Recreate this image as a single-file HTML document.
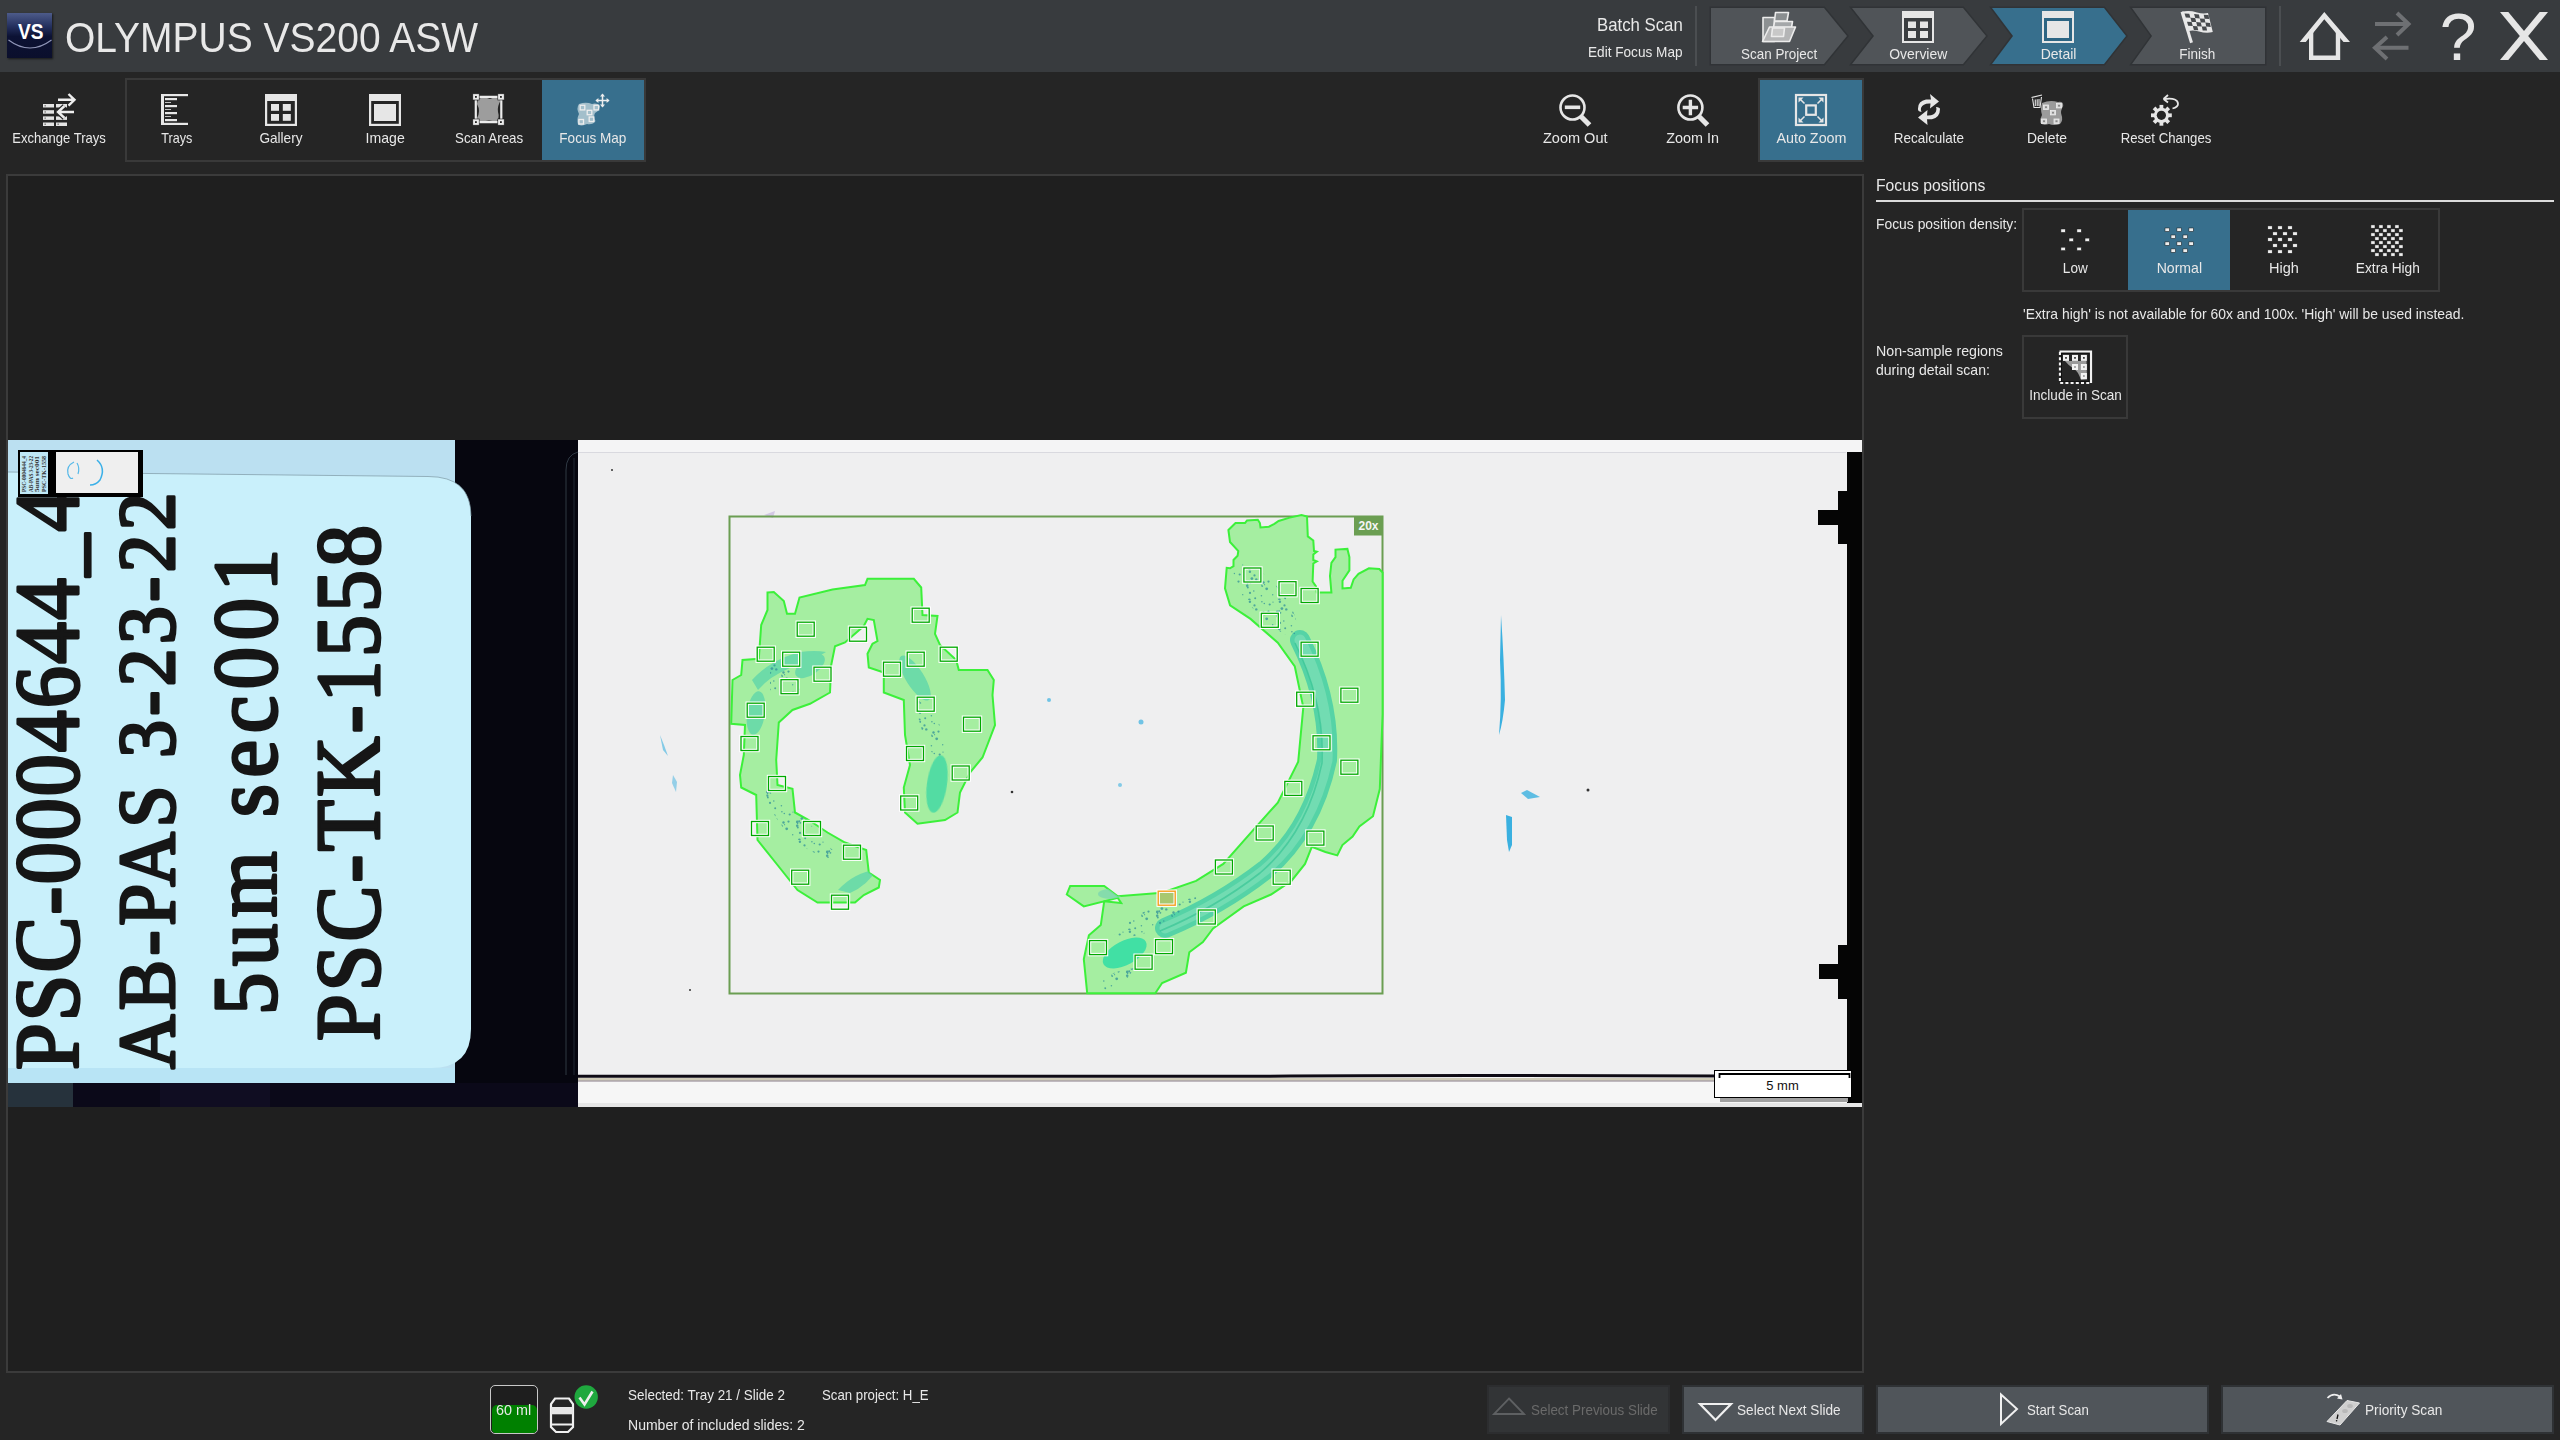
<!DOCTYPE html>
<html><head><meta charset="utf-8">
<style>
*{margin:0;padding:0;box-sizing:border-box}
html,body{width:2560px;height:1440px;overflow:hidden;background:#252525;font-family:"Liberation Sans",sans-serif;color:#e6e6e6}
.a{position:absolute}
.t{position:absolute;white-space:pre;line-height:1;color:#e8e8e8;transform-origin:0 0}
.c{transform-origin:50% 0}
svg{position:absolute;overflow:visible}
</style></head><body>
<!-- HEADER -->
<div class="a" style="left:0;top:0;width:2560px;height:72px;background:#383b3e"></div>
<!-- VS logo -->
<div class="a" style="left:7px;top:13px;width:45px;height:45px;background:linear-gradient(#4d5b8a 0%,#24305e 30%,#0c1234 52%,#0b0f2c 100%);box-shadow:1px 1px 2px rgba(0,0,0,.6)"></div>
<svg style="left:0;top:0" width="60" height="70">
 <path d="M8.5,40 Q30,56 51.5,40" stroke="#a8aed0" stroke-width="1.1" fill="none" opacity=".85"/>
 <text x="18" y="39" font-family="Liberation Sans" font-weight="bold" font-size="22" fill="#fff" textLength="25.5" lengthAdjust="spacingAndGlyphs">VS</text>
</svg>
<div class="a" style="left:1695px;top:6px;width:2px;height:60px;background:#4b4e51"></div>
<div class="a" style="left:2279px;top:6px;width:2px;height:60px;background:#4b4e51"></div>

<!-- chevrons -->
<svg style="left:0;top:0" width="2560" height="72">
 <g stroke="#303336" stroke-width="3" stroke-linejoin="miter" paint-order="stroke">
  <path d="M1711,8 H1824 L1847,36 L1824,64 H1711 Z" fill="#505458"/>
  <path d="M1852,8 H1963 L1986,36 L1963,64 H1852 L1874,36 Z" fill="#505458"/>
  <path d="M1992,8 H2104 L2126,36 L2104,64 H1992 L2013,36 Z" fill="#376f8d"/>
  <path d="M2132,8 H2265 V64 H2132 L2152,36 Z" fill="#505458"/>
 </g>
 <!-- scan project icon -->
 <g transform="translate(1755,8)" stroke="#ececec" stroke-width="1.6" stroke-linejoin="round">
  <path d="M8,9.5 H19.5 V33.5 H8 Z" fill="#8c9092"/>
  <path d="M20.5,4.5 H33.5 L32,13 H19.5 Z" fill="#8a8e90"/>
  <path d="M19.5,13.5 H37.5 L36.5,19.5 H18.5 Z" fill="#a4a7a9"/>
  <path d="M14.5,19 H40.5 L34.5,33.5 H7.5 Z" fill="#b4b5b6"/>
  <path d="M17.5,20 H29.5 L28.5,28.5 H16.5 Z" fill="#c8c8c8"/>
 </g>
 <!-- overview icon -->
 <g transform="translate(1902,11)">
  <rect x="0" y="0" width="32" height="32" fill="#e6e6e6"/>
  <rect x="2" y="7" width="28" height="23" fill="#3b3e41"/>
  <rect x="6" y="10.5" width="8" height="6.5" fill="#e6e6e6"/>
  <rect x="18" y="10.5" width="8" height="6.5" fill="#e6e6e6"/>
  <rect x="6" y="20" width="8" height="7" fill="#e6e6e6"/>
  <rect x="18" y="20" width="8" height="7" fill="#e6e6e6"/>
 </g>
 <!-- detail icon -->
 <g transform="translate(2042,11)">
  <rect x="0" y="0" width="32" height="32" fill="#e6e6e6"/>
  <rect x="2" y="7" width="28" height="23" fill="#2d6583"/>
  <rect x="5" y="10" width="22" height="17" fill="#e6e6e6"/>
 </g>
 <!-- finish flag -->
 <g transform="translate(2175,6)">
  <path d="M7,5.8 Q14,4 22,6.5 Q28,8 33,7 L37.8,26.1 Q31,27.5 24,25.5 Q18,24 13.9,25 Z" fill="#e8e8e8"/>
  <path d="M7,5.8 L16.5,36.8" stroke="#e8e8e8" stroke-width="3"/>
  <path d="M9.5,7.5 L14.3,7.8 L15.4,11.8 L10.8,11.6 Z M12.0,15.7 L16.6,15.9 L17.8,19.9 L13.2,19.7 Z M15.4,11.8 L20.2,12.1 L21.2,16.1 L16.6,15.9 Z M17.8,19.9 L22.2,20.2 L23.3,24.2 L18.9,24.0 Z M19.1,8.1 L23.9,8.4 L24.8,12.4 L20.2,12.1 Z M21.2,16.1 L25.8,16.4 L26.8,20.4 L22.2,20.2 Z M24.8,12.4 L29.6,12.7 L30.4,16.6 L25.8,16.4 Z M26.8,20.4 L31.2,20.6 L32.1,24.6 L27.7,24.4 Z M28.7,8.7 L33.5,9.0 L34.2,12.9 L29.6,12.7 Z M30.4,16.6 L35.0,16.9 L35.8,20.9 L31.2,20.6 Z" fill="#474a4d"/>
 </g>
 <!-- home -->
 <g fill="#e6e6e6">
  <path d="M2299.7,41.9 L2324.3,12 L2350,41.9 L2343.5,41.9 L2324.3,19.3 L2305.8,41.9 Z"/>
  <path d="M2309,31.5 L2313.3,26.5 V55.6 H2335.8 V26.5 L2340.2,31.5 V60 H2309 Z"/>
 </g>
 <!-- swap arrows (disabled) -->
 <g stroke="#6e7073" stroke-width="4" fill="none" transform="translate(2280,0)">
  <path d="M95,24 H128.5"/><path d="M117,13 L128.5,24 L117,35"/>
  <path d="M128.5,47.8 H95"/><path d="M107,37 L95,47.8 L107,59"/>
 </g>
 <!-- help ? -->
 <text x="2458" y="60" text-anchor="middle" font-family="Liberation Sans" font-size="66" fill="#e6e6e6">?</text>
 <!-- close X -->
 <g fill="#e6e6e6">
  <path d="M2500,12 H2508.3 L2548,60 H2539.7 Z"/>
  <path d="M2539.7,12 H2548 L2508.3,60 H2500 Z"/>
 </g>
</svg>
<!-- TOOLBAR -->
<div class="a" style="left:125px;top:78px;width:521px;height:84px;border:2px solid #393939"></div>
<div class="a" style="left:542px;top:80px;width:102px;height:80px;background:#376f8d"></div>
<div class="a" style="left:1758px;top:78px;width:106px;height:84px;border:2px solid #393939;background:#376f8d"></div>
<svg style="left:0;top:0" width="2560" height="170">
 <!-- exchange trays -->
 <g fill="#e4e4e4">
  <rect x="43" y="104" width="11" height="3.5"/><rect x="56" y="104" width="11" height="3.5"/>
  <rect x="43" y="110.2" width="11" height="3.5"/><rect x="56" y="110.2" width="11" height="3.5"/>
  <rect x="43" y="116.4" width="11" height="3.5"/><rect x="56" y="116.4" width="11" height="3.5"/>
  <rect x="43" y="122.5" width="11" height="3.5"/><rect x="56" y="122.5" width="11" height="3.5"/>
 </g>
 <g fill="#777"><rect x="44.5" y="105" width="1.3" height="1.5"/><rect x="44.5" y="111.2" width="1.3" height="1.5"/><rect x="44.5" y="117.4" width="1.3" height="1.5"/><rect x="44.5" y="123.5" width="1.3" height="1.5"/><rect x="57.5" y="123.5" width="1.3" height="1.5"/></g>
 <g stroke="#252525" stroke-width="5" fill="none"><path d="M58,112 H74 M64.5,106 L58,112 L64.5,118"/></g>
 <g stroke="#eeeeee" stroke-width="2.4" fill="none">
  <path d="M58,99.8 H74.5 M68.5,94 L74.5,99.8 L68.5,105.6"/>
  <path d="M58,112 H74 M64.5,106 L58,112 L64.5,118"/>
 </g>
 <!-- trays -->
 <g fill="#e8e8e8">
  <rect x="161" y="94" width="3" height="31"/><rect x="161" y="94" width="27" height="2.2"/><rect x="161" y="122.8" width="27" height="2.2"/>
  <rect x="165" y="98" width="12" height="2.2"/><rect x="165" y="105" width="12" height="2.2"/><rect x="165" y="112" width="12" height="2.2"/><rect x="165" y="119" width="12" height="2.2"/>
  <rect x="165" y="102" width="6" height="1" opacity=".8"/><rect x="165" y="109" width="6" height="1" opacity=".8"/><rect x="165" y="116" width="6" height="1" opacity=".8"/>
 </g>
 <!-- gallery -->
 <g>
  <rect x="265" y="94" width="32" height="32" fill="#e6e6e6"/>
  <rect x="267.2" y="101" width="27.6" height="22.8" fill="#252525"/>
  <g fill="#e6e6e6"><rect x="271" y="104" width="8" height="6.8"/><rect x="282.8" y="104" width="8" height="6.8"/><rect x="271" y="114" width="8" height="6.8"/><rect x="282.8" y="114" width="8" height="6.8"/></g>
 </g>
 <!-- image -->
 <g>
  <rect x="369" y="94" width="32" height="32" fill="#e6e6e6"/>
  <rect x="371.2" y="101" width="27.6" height="22.8" fill="#252525"/>
  <rect x="374" y="104" width="22" height="17" fill="#e6e6e6"/>
 </g>
 <!-- scan areas -->
 <g>
  <path d="M478,99 Q484,96 490,99 Q496,96 501,100 Q497,106 498,112 Q500,118 496,122 Q489,119 482,122 Q477,121 477,118 Q481,111 477,104 Z" fill="#9d9d9d"/>
  <g stroke="#ececec" stroke-width="2.2" fill="none"><path d="M479,96.8 H498 M479,122.2 H498 M475.8,100 V119.5 M501.3,100 V119.5"/></g>
  <g fill="#ececec" stroke="#1a1a1a" stroke-width=".6">
   <rect x="472.8" y="93.8" width="6.4" height="6.2"/><rect x="497.8" y="93.8" width="6.4" height="6.2"/>
   <rect x="472.8" y="119" width="6.4" height="6.2"/><rect x="497.8" y="119" width="6.4" height="6.2"/>
  </g>
  <g fill="#222"><rect x="475" y="96" width="1.8" height="1.8"/><rect x="500" y="96" width="1.8" height="1.8"/><rect x="475" y="121.2" width="1.8" height="1.8"/><rect x="500" y="121.2" width="1.8" height="1.8"/></g>
 </g>
 <!-- focus map -->
 <g>
  <path d="M579,104 Q586,101.5 592,104 Q597,102.5 600,106 Q599.5,111 595,113 Q593,117 595.5,121 Q593,125 587,124 Q582,126.5 578,124.5 Q576.5,119 579,114 Q576,108 579,104 Z" fill="#a3bfcb"/>
  <g stroke="#eeeeee" stroke-width="1.3" fill="none">
   <rect x="580.2" y="105.3" width="4.6" height="4.6"/><rect x="594" y="105.3" width="4.6" height="4.6"/>
   <rect x="587.2" y="110.3" width="4.6" height="4.4"/><rect x="589.2" y="117" width="4.6" height="4.5"/><rect x="578.9" y="119.5" width="4.6" height="4.5"/>
  </g>
  <g stroke="#eeeeee" stroke-width="1.5" fill="none"><path d="M596.5,100.6 H608.5 M602.5,94.6 V106.6"/></g>
  <g fill="#eeeeee"><path d="M602.5,93.5 L600,96.5 H605 Z M602.5,107.6 L600,104.6 H605 Z M595.4,100.6 L598.4,98.1 V103.1 Z M609.6,100.6 L606.6,98.1 V103.1 Z"/></g>
 </g>
 <!-- zoom out -->
 <g stroke="#e6e6e6" fill="none">
  <circle cx="1572.5" cy="107.5" r="12" stroke-width="2.6"/>
  <path d="M1564.8,107.3 H1580.2" stroke-width="3.6"/>
  <path d="M1581,116.5 L1589.5,125" stroke-width="5.2"/>
 </g>
 <!-- zoom in -->
 <g stroke="#e6e6e6" fill="none">
  <circle cx="1690.4" cy="107.5" r="12" stroke-width="2.6"/>
  <path d="M1682.7,107.5 H1698.1 M1690.4,99.8 V115.2" stroke-width="3.4"/>
  <path d="M1699,116.5 L1707.5,125" stroke-width="5.2"/>
 </g>
 <!-- auto zoom -->
 <g stroke="#e6e6e6" fill="none">
  <rect x="1796" y="95" width="30" height="30" stroke-width="2.2"/>
  <rect x="1806.2" y="105.4" width="9.6" height="9.4" stroke-width="2.2"/>
  <g stroke-width="1.5"><path d="M1799.5,98.5 L1804.5,103.5 M1822.5,98.5 L1817.5,103.5 M1799.5,121.5 L1804.5,116.5 M1822.5,121.5 L1817.5,116.5"/></g>
 </g>
 <g fill="#e6e6e6"><path d="M1798.5,97.5 h5 l-5,5 Z M1823.5,97.5 h-5 l5,5 Z M1798.5,122.5 h5 l-5,-5 Z M1823.5,122.5 h-5 l5,-5 Z"/></g>
 <!-- recalculate -->
 <g fill="#e6e6e6">
  <path d="M1918,108.5 Q1918,101 1926,99.5 L1931,99.5 L1930,94 L1939,101.5 L1930,108.5 L1930.5,103.5 Q1923,103 1921,108 Q1920.5,110 1921.5,112 Q1917.5,111.5 1918,108.5 Z"/>
  <path d="M1940,109 Q1940,117.5 1932,119.2 L1927,119.2 L1927.5,125 L1918,117.5 L1927.5,110 L1927,115.5 Q1934,116 1936,111.5 Q1937,109 1936,107 Q1940,107.5 1940,109 Z"/>
 </g>
 <!-- delete -->
 <g>
  <path d="M2042,103 Q2050,99.5 2058,102 Q2063.5,101 2063.2,106 Q2060,111 2061.5,115 Q2063.5,120 2060,124 Q2054,126 2049,124 Q2043,126 2040.5,123 Q2039.5,119 2042,115 Q2040,109 2042,103 Z" fill="#9b9b9b"/>
  <g fill="#d8d8d8" stroke="#eeeeee" stroke-width=".8">
   <rect x="2043.5" y="105" width="5" height="4.4"/><rect x="2056.5" y="103.5" width="5" height="4.4"/><rect x="2050.5" y="110.5" width="5" height="4.4"/>
   <rect x="2041.5" y="119" width="5" height="4.4"/><rect x="2054" y="119" width="5" height="4.4"/>
  </g>
  <g fill="#8a8a8a"><rect x="2045" y="106.3" width="2" height="1.8"/><rect x="2058" y="104.8" width="2" height="1.8"/><rect x="2052" y="111.8" width="2" height="1.8"/><rect x="2043" y="120.3" width="2" height="1.8"/><rect x="2055.5" y="120.3" width="2" height="1.8"/></g>
  <g stroke="#e6e6e6" fill="none" stroke-width="1.1">
   <path d="M2031.5,97.5 L2042,95"/><path d="M2032.5,98.5 L2034,107.5 H2040 L2041.5,97"/>
   <path d="M2035.3,99.5 V106 M2037.2,99.2 V106 M2039,99 V106"/>
  </g>
 </g>
 <!-- reset changes -->
 <g>
  <g fill="#e6e6e6" transform="translate(2161.4,115.3)">
   <circle r="7.6"/>
   <g><rect x="-1.9" y="-10.4" width="3.8" height="4"/><rect x="-1.9" y="6.4" width="3.8" height="4"/><rect x="-10.4" y="-1.9" width="4" height="3.8"/><rect x="6.4" y="-1.9" width="4" height="3.8"/></g>
   <g transform="rotate(45)"><rect x="-1.9" y="-10.4" width="3.8" height="4"/><rect x="-1.9" y="6.4" width="3.8" height="4"/><rect x="-10.4" y="-1.9" width="4" height="3.8"/><rect x="6.4" y="-1.9" width="4" height="3.8"/></g>
   <circle r="4.6" fill="#252525"/>
  </g>
  <path d="M2165,99 Q2178,97.5 2178,104 Q2178,107 2172.5,108.5" stroke="#e6e6e6" stroke-width="1.8" fill="none"/>
  <path d="M2163.5,99 L2168,95 M2163.5,99 L2168,102.5" stroke="#e6e6e6" stroke-width="1.8" fill="none"/>
 </g>
</svg>
<!-- MAIN VIEW -->
<div class="a" style="left:6px;top:174px;width:1858px;height:1199px;border:2px solid #3b3b3b;background:#1f1f1f"></div>
<!-- SLIDE -->
<svg style="left:0;top:0" width="2560" height="1440"><defs><clipPath id="sc"><rect x="8" y="440" width="1854" height="667"/></clipPath></defs><g clip-path="url(#sc)">
<rect x="8" y="440" width="570" height="667" fill="#06060f"/>
<rect x="8" y="440" width="447" height="643" fill="#bbe0f1"/>
<path d="M0,472 L428,476.5 Q471,476.5 471,516 V1029 Q471,1068 431,1068 H0 Z" fill="#c9f0fb"/>
<path d="M8,472 L428,476.5 Q471,476.5 471,516" stroke="#7d98a4" stroke-width="1" fill="none" opacity=".7"/>
<rect x="8" y="1068" width="447" height="15" fill="#b8e4f5"/>
<rect x="8" y="1083" width="570" height="24" fill="#0b0919"/>
<rect x="8" y="1083" width="65" height="24" fill="#26323c"/>
<rect x="160" y="1083" width="110" height="24" fill="#120f24" opacity=".8"/>
<path d="M578,452 Q566,455 566,470 V1075" stroke="#4a5a66" stroke-width="1" fill="none" opacity=".6"/>
<path d="M574,458 V1075" stroke="#3a4a55" stroke-width="1" fill="none" opacity=".5"/>
<g font-family="Liberation Serif" fill="#161616" stroke="#161616" stroke-width="3.2" stroke-linejoin="round">
<text transform="translate(77.5,1070) rotate(-90) scale(0.93,1)" font-size="90" textLength="623.7" lengthAdjust="spacing">PSC-0004644_4</text>
<text transform="translate(173.5,1069) rotate(-90) scale(0.93,1)" font-size="81" textLength="619.9" lengthAdjust="spacing">AB-PAS 3-23-22</text>
<text transform="translate(276,1015) rotate(-90) scale(0.93,1)" font-size="91" textLength="501.1" lengthAdjust="spacing">5um sec001</text>
<text transform="translate(378.5,1041) rotate(-90) scale(0.93,1)" font-size="90" textLength="554.8" lengthAdjust="spacing">PSC-TK-1558</text>
</g>
<rect x="18" y="450" width="125" height="47" fill="#000"/>
<rect x="20" y="452" width="28" height="42" fill="#bfe8f6"/>
<rect x="56" y="452" width="82" height="41" fill="#efefef"/>
<g font-family="Liberation Serif" font-weight="bold" font-size="5.5" fill="#333">
<text transform="translate(26.0,492) rotate(-90)" textLength="36" lengthAdjust="spacingAndGlyphs">PSC-0004644_4</text>
<text transform="translate(32.5,492) rotate(-90)" textLength="36" lengthAdjust="spacingAndGlyphs">AB-PAS 3-23-22</text>
<text transform="translate(39.0,492) rotate(-90)" textLength="36" lengthAdjust="spacingAndGlyphs">5um sec001</text>
<text transform="translate(45.5,492) rotate(-90)" textLength="36" lengthAdjust="spacingAndGlyphs">PSC-TK-1558</text>
</g>
<path d="M74,462 Q66,466 68,474 Q70,480 73,478 M77,463 Q80,468 78,474" stroke="#55b8e8" stroke-width="1.2" fill="none"/>
<path d="M97,460 Q106,468 100,480 Q96,485 90,485" stroke="#3ab0e8" stroke-width="1.5" fill="none"/>
<rect x="578" y="440" width="1284" height="667" fill="#efeff0"/>
<rect x="578" y="440" width="1284" height="12" fill="#f4f4f5"/>
<path d="M578,452.5 H1846" stroke="#d0d0d8" stroke-width="1" opacity=".7"/>
<rect x="578" y="1077" width="1270" height="26" fill="#f6f6f6"/>
<path d="M578,1076.3 H1250 Q1400,1075 1720,1076" stroke="#0e0a14" stroke-width="3" fill="none"/>
<rect x="578" y="1078" width="1140" height="2.5" fill="#cfcbb8"/>
<path d="M578,1081 H1718" stroke="#5a4a5a" stroke-width="1" opacity=".7"/>
<rect x="578" y="1103" width="1284" height="4" fill="#e6e6e6"/>
<rect x="1847" y="452" width="15" height="651" fill="#050505"/>
<path d="M1838,491 H1848 V544 H1838 V525 H1818 V510 H1838 Z" fill="#050505"/>
<path d="M1838,945 H1848 V999 H1838 V979 H1819 V964 H1838 Z" fill="#050505"/>
<g fill="#3ab0e0">
<path d="M1501,615 Q1504,660 1505,700 Q1503,722 1499,735 Q1502,700 1500,660 Z"/>
<path d="M1506,815 L1512,817 L1512,845 L1509,852 L1507,840 Z"/>
<path d="M1521,793 L1527,790 L1540,797 L1528,799 Z" opacity=".8"/>
<path d="M660,735 L664,745 L668,756 L663,750 Z" opacity=".6"/>
<path d="M673,775 L677,782 L676,792 L672,783 Z" opacity=".5"/>
<circle cx="1049" cy="700" r="2" opacity=".7"/><circle cx="1141" cy="722" r="2.5" opacity=".7"/><circle cx="1120" cy="785" r="2" opacity=".6"/>
</g>
<g fill="#333"><circle cx="1012" cy="792" r="1.3"/><circle cx="1588" cy="790" r="1.5"/><circle cx="612" cy="470" r="1"/><circle cx="690" cy="990" r="1"/></g>
<path d="M764,515 L775,511 L773,518 Z" fill="#c8b8e0" opacity=".7"/>
<rect x="729.5" y="516.5" width="653" height="477" stroke="#6b9e52" stroke-width="2" fill="none"/>
<path d="M767.5,592.5 L773.8,592.0 L783.8,601.0 L787.0,613.8 L795.0,613.8 L799.5,597.5 L832.5,589.5 L865.0,585.0 L867.5,578.8 L913.8,578.8 L921.2,587.5 L922.5,615.0 L937.5,616.0 L935.0,633.8 L940.0,645.0 L956.2,660.0 L958.8,670.0 L987.5,670.0 L993.8,680.0 L992.5,695.0 L995.0,725.0 L982.5,757.5 L970.0,772.5 L960.0,792.5 L957.5,812.5 L945.0,820.0 L917.5,823.8 L905.0,812.5 L903.8,787.5 L910.0,765.0 L905.0,735.0 L903.8,700.0 L883.8,692.5 L883.8,672.5 L868.8,667.5 L867.5,653.8 L872.5,643.8 L877.5,641.0 L873.8,620.0 L867.5,618.8 L863.8,626.0 L845.0,642.5 L835.0,646.2 L831.2,665.0 L830.0,692.5 L810.0,703.8 L792.5,710.0 L778.8,722.5 L776.2,760.0 L777.5,785.0 L792.5,788.8 L795.0,812.5 L808.8,820.0 L827.5,832.5 L845.0,842.5 L866.2,850.0 L868.8,872.5 L880.0,880.0 L878.8,887.5 L863.8,895.0 L855.0,902.5 L817.5,902.5 L797.5,890.0 L777.5,865.0 L757.5,840.0 L756.2,795.0 L741.2,787.5 L740.0,775.0 L743.8,755.0 L745.0,725.0 L731.2,723.8 L732.5,680.0 L741.2,675.0 L742.5,660.0 L758.8,658.8 L761.2,625.0 L767.5,610.0 Z" fill="#a5eea1" stroke="#3cf03a" stroke-width="2"/>
<path d="M1228.4,530.0 L1235.5,523.0 L1245.0,523.0 L1247.0,520.4 L1257.8,519.7 L1259.9,523.0 L1260.5,527.4 L1268.9,526.7 L1274.4,523.9 L1278.6,521.0 L1289.7,517.6 L1301.5,515.0 L1307.0,516.6 L1307.8,536.4 L1313.3,540.5 L1314.0,551.0 L1316.8,551.7 L1313.3,554.4 L1313.3,560.0 L1316.8,561.4 L1313.3,563.5 L1312.6,581.5 L1316.0,586.4 L1316.8,592.6 L1331.4,592.6 L1330.0,576.0 L1331.4,562.8 L1335.5,557.2 L1335.5,549.6 L1347.4,548.9 L1349.4,557.2 L1349.4,570.4 L1342.5,580.8 L1342.5,588.5 L1350.8,587.8 L1353.6,579.4 L1358.5,573.9 L1368.9,568.3 L1379.3,569.0 L1382.6,572.5 L1382.6,714.2 L1379.8,789.0 L1373.0,816.2 L1359.4,826.4 L1352.6,836.6 L1342.4,845.1 L1337.3,855.4 L1325.4,852.0 L1311.8,846.9 L1305.0,863.9 L1291.4,880.9 L1271.0,894.5 L1243.7,906.4 L1213.1,928.5 L1202.9,942.1 L1189.3,952.3 L1185.9,972.7 L1162.1,983.0 L1155.3,993.2 L1087.2,993.2 L1083.8,959.1 L1088.9,935.3 L1100.8,925.1 L1104.2,901.3 L1121.2,903.0 L1117.8,897.9 L1083.8,906.4 L1066.8,894.5 L1070.2,886.0 L1104.2,886.0 L1117.8,896.2 L1162.1,892.8 L1196.1,880.9 L1223.3,863.9 L1250.5,833.2 L1277.8,802.6 L1298.2,761.8 L1303.3,707.3 L1294.8,666.5 L1277.8,642.7 L1250.5,618.9 L1230.1,605.3 L1225.0,588.3 L1226.7,567.8 L1230.0,568.3 L1233.5,566.2 L1233.5,560.0 L1237.6,555.8 L1238.3,551.0 L1230.0,542.0 Z" fill="#a5eea1" stroke="#3cf03a" stroke-width="2"/>
<defs><pattern id="spk" width="30" height="30" patternUnits="userSpaceOnUse"><g fill="#2f8f98" opacity=".75"><circle cx="9.7" cy="4.5" r="1.1"/><circle cx="2.2" cy="16.1" r="0.9"/><circle cx="1.7" cy="15.2" r="0.6"/><circle cx="13.0" cy="2.1" r="0.7"/><circle cx="12.7" cy="24.8" r="0.7"/><circle cx="6.7" cy="18.8" r="1.4"/><circle cx="17.3" cy="11.9" r="1.4"/><circle cx="1.4" cy="25.8" r="0.8"/><circle cx="4.3" cy="3.5" r="0.8"/><circle cx="24.5" cy="5.4" r="1.1"/><circle cx="19.2" cy="11.2" r="1.0"/><circle cx="1.9" cy="1.8" r="0.8"/><circle cx="20.4" cy="12.8" r="0.9"/><circle cx="17.6" cy="13.6" r="0.8"/><circle cx="23.8" cy="21.0" r="0.8"/><circle cx="17.2" cy="15.8" r="1.3"/><circle cx="21.9" cy="8.6" r="1.4"/><circle cx="3.5" cy="12.5" r="1.2"/><circle cx="4.6" cy="14.7" r="0.6"/><circle cx="20.0" cy="22.9" r="1.1"/><circle cx="26.3" cy="9.4" r="1.2"/><circle cx="17.8" cy="17.4" r="1.0"/><circle cx="25.2" cy="28.3" r="1.0"/><circle cx="19.9" cy="1.8" r="1.2"/><circle cx="19.4" cy="29.8" r="1.3"/><circle cx="8.5" cy="11.6" r="1.1"/></g></pattern><clipPath id="tis"><path d="M767.5,592.5 L773.8,592.0 L783.8,601.0 L787.0,613.8 L795.0,613.8 L799.5,597.5 L832.5,589.5 L865.0,585.0 L867.5,578.8 L913.8,578.8 L921.2,587.5 L922.5,615.0 L937.5,616.0 L935.0,633.8 L940.0,645.0 L956.2,660.0 L958.8,670.0 L987.5,670.0 L993.8,680.0 L992.5,695.0 L995.0,725.0 L982.5,757.5 L970.0,772.5 L960.0,792.5 L957.5,812.5 L945.0,820.0 L917.5,823.8 L905.0,812.5 L903.8,787.5 L910.0,765.0 L905.0,735.0 L903.8,700.0 L883.8,692.5 L883.8,672.5 L868.8,667.5 L867.5,653.8 L872.5,643.8 L877.5,641.0 L873.8,620.0 L867.5,618.8 L863.8,626.0 L845.0,642.5 L835.0,646.2 L831.2,665.0 L830.0,692.5 L810.0,703.8 L792.5,710.0 L778.8,722.5 L776.2,760.0 L777.5,785.0 L792.5,788.8 L795.0,812.5 L808.8,820.0 L827.5,832.5 L845.0,842.5 L866.2,850.0 L868.8,872.5 L880.0,880.0 L878.8,887.5 L863.8,895.0 L855.0,902.5 L817.5,902.5 L797.5,890.0 L777.5,865.0 L757.5,840.0 L756.2,795.0 L741.2,787.5 L740.0,775.0 L743.8,755.0 L745.0,725.0 L731.2,723.8 L732.5,680.0 L741.2,675.0 L742.5,660.0 L758.8,658.8 L761.2,625.0 L767.5,610.0 Z M1228.4,530.0 L1235.5,523.0 L1245.0,523.0 L1247.0,520.4 L1257.8,519.7 L1259.9,523.0 L1260.5,527.4 L1268.9,526.7 L1274.4,523.9 L1278.6,521.0 L1289.7,517.6 L1301.5,515.0 L1307.0,516.6 L1307.8,536.4 L1313.3,540.5 L1314.0,551.0 L1316.8,551.7 L1313.3,554.4 L1313.3,560.0 L1316.8,561.4 L1313.3,563.5 L1312.6,581.5 L1316.0,586.4 L1316.8,592.6 L1331.4,592.6 L1330.0,576.0 L1331.4,562.8 L1335.5,557.2 L1335.5,549.6 L1347.4,548.9 L1349.4,557.2 L1349.4,570.4 L1342.5,580.8 L1342.5,588.5 L1350.8,587.8 L1353.6,579.4 L1358.5,573.9 L1368.9,568.3 L1379.3,569.0 L1382.6,572.5 L1382.6,714.2 L1379.8,789.0 L1373.0,816.2 L1359.4,826.4 L1352.6,836.6 L1342.4,845.1 L1337.3,855.4 L1325.4,852.0 L1311.8,846.9 L1305.0,863.9 L1291.4,880.9 L1271.0,894.5 L1243.7,906.4 L1213.1,928.5 L1202.9,942.1 L1189.3,952.3 L1185.9,972.7 L1162.1,983.0 L1155.3,993.2 L1087.2,993.2 L1083.8,959.1 L1088.9,935.3 L1100.8,925.1 L1104.2,901.3 L1121.2,903.0 L1117.8,897.9 L1083.8,906.4 L1066.8,894.5 L1070.2,886.0 L1104.2,886.0 L1117.8,896.2 L1162.1,892.8 L1196.1,880.9 L1223.3,863.9 L1250.5,833.2 L1277.8,802.6 L1298.2,761.8 L1303.3,707.3 L1294.8,666.5 L1277.8,642.7 L1250.5,618.9 L1230.1,605.3 L1225.0,588.3 L1226.7,567.8 L1230.0,568.3 L1233.5,566.2 L1233.5,560.0 L1237.6,555.8 L1238.3,551.0 L1230.0,542.0 Z"/></clipPath></defs>
<g clip-path="url(#tis)">
<g fill="#5fd6aa" opacity=".8">
<path d="M752,680 Q770,660 800,652 Q815,650 826,652 Q810,662 790,668 Q770,676 758,690 Z"/>
<ellipse cx="810" cy="666" rx="17" ry="9" transform="rotate(-35 810 666)"/>
<ellipse cx="756" cy="713" rx="9" ry="22" transform="rotate(8 756 713)"/>
<ellipse cx="915" cy="678" rx="9" ry="26" transform="rotate(-32 915 678)"/>
<ellipse cx="937" cy="784" rx="10" ry="29" transform="rotate(8 937 784)" fill="#3fd8a4"/>
<path d="M838,890 Q855,872 876,870 Q868,885 850,893 Z"/>
<ellipse cx="1124.7" cy="953" rx="24" ry="12" transform="rotate(-28 1124.7 953)" fill="#28dca6"/>
<ellipse cx="1110" cy="894" rx="12" ry="5" fill="#7ed8b0"/>
</g>
<path d="M1300,640 Q1330,700 1327,760 Q1312,830 1265,870 Q1220,905 1165,928" stroke="#55d3a6" stroke-width="20" fill="none" stroke-linecap="round"/>
<path d="M1300,640 Q1330,700 1327,760 Q1312,830 1265,870 Q1220,905 1165,928" stroke="#72dcb2" stroke-width="11" fill="none" stroke-linecap="round"/>
<path d="M1300,640 Q1330,700 1327,760 Q1312,830 1265,870 Q1220,905 1165,928" stroke="#39c596" stroke-width="1.6" fill="none" opacity=".7" transform="translate(-5,3)"/>
<g fill="url(#spk)">
<path d="M1232,565 Q1255,560 1280,590 Q1300,615 1298,640 Q1270,630 1250,605 Q1235,590 1232,565 Z"/>
<path d="M1110,940 Q1130,915 1160,905 Q1185,900 1200,895 Q1170,925 1140,935 Z"/>
<path d="M1100,980 Q1115,970 1135,968 Q1125,985 1105,990 Z"/>
<path d="M765,790 Q790,800 815,830 Q830,850 845,860 Q815,860 790,835 Q770,815 765,790 Z"/>
<path d="M915,700 Q935,705 945,740 Q948,760 935,758 Q920,735 915,700 Z"/>
<path d="M770,665 Q790,658 800,690 Q780,700 770,690 Z"/>
</g>
</g>
<g fill="none">
<rect x="797.2" y="622.2" width="17" height="14" stroke="#ffffff" stroke-width="3.4"/><rect x="797.2" y="622.2" width="17" height="14" stroke="#00a800" stroke-width="1.3"/>
<rect x="849.5" y="627.2" width="17" height="14" stroke="#ffffff" stroke-width="3.4"/><rect x="849.5" y="627.2" width="17" height="14" stroke="#00a800" stroke-width="1.3"/>
<rect x="912.2" y="608.2" width="17" height="14" stroke="#ffffff" stroke-width="3.4"/><rect x="912.2" y="608.2" width="17" height="14" stroke="#00a800" stroke-width="1.3"/>
<rect x="757.2" y="647.2" width="17" height="14" stroke="#ffffff" stroke-width="3.4"/><rect x="757.2" y="647.2" width="17" height="14" stroke="#00a800" stroke-width="1.3"/>
<rect x="782.7" y="652.2" width="17" height="14" stroke="#ffffff" stroke-width="3.4"/><rect x="782.7" y="652.2" width="17" height="14" stroke="#00a800" stroke-width="1.3"/>
<rect x="940.2" y="647.2" width="17" height="14" stroke="#ffffff" stroke-width="3.4"/><rect x="940.2" y="647.2" width="17" height="14" stroke="#00a800" stroke-width="1.3"/>
<rect x="907.2" y="652.2" width="17" height="14" stroke="#ffffff" stroke-width="3.4"/><rect x="907.2" y="652.2" width="17" height="14" stroke="#00a800" stroke-width="1.3"/>
<rect x="814.0" y="667.2" width="17" height="14" stroke="#ffffff" stroke-width="3.4"/><rect x="814.0" y="667.2" width="17" height="14" stroke="#00a800" stroke-width="1.3"/>
<rect x="883.5" y="662.2" width="17" height="14" stroke="#ffffff" stroke-width="3.4"/><rect x="883.5" y="662.2" width="17" height="14" stroke="#00a800" stroke-width="1.3"/>
<rect x="781.0" y="679.7" width="17" height="14" stroke="#ffffff" stroke-width="3.4"/><rect x="781.0" y="679.7" width="17" height="14" stroke="#00a800" stroke-width="1.3"/>
<rect x="747.2" y="703.2" width="17" height="14" stroke="#ffffff" stroke-width="3.4"/><rect x="747.2" y="703.2" width="17" height="14" stroke="#00a800" stroke-width="1.3"/>
<rect x="917.2" y="697.2" width="17" height="14" stroke="#ffffff" stroke-width="3.4"/><rect x="917.2" y="697.2" width="17" height="14" stroke="#00a800" stroke-width="1.3"/>
<rect x="963.5" y="717.2" width="17" height="14" stroke="#ffffff" stroke-width="3.4"/><rect x="963.5" y="717.2" width="17" height="14" stroke="#00a800" stroke-width="1.3"/>
<rect x="741.0" y="736.5" width="17" height="14" stroke="#ffffff" stroke-width="3.4"/><rect x="741.0" y="736.5" width="17" height="14" stroke="#00a800" stroke-width="1.3"/>
<rect x="906.5" y="746.5" width="17" height="14" stroke="#ffffff" stroke-width="3.4"/><rect x="906.5" y="746.5" width="17" height="14" stroke="#00a800" stroke-width="1.3"/>
<rect x="768.5" y="776.5" width="17" height="14" stroke="#ffffff" stroke-width="3.4"/><rect x="768.5" y="776.5" width="17" height="14" stroke="#00a800" stroke-width="1.3"/>
<rect x="952.2" y="766.0" width="17" height="14" stroke="#ffffff" stroke-width="3.4"/><rect x="952.2" y="766.0" width="17" height="14" stroke="#00a800" stroke-width="1.3"/>
<rect x="900.7" y="796.0" width="17" height="14" stroke="#ffffff" stroke-width="3.4"/><rect x="900.7" y="796.0" width="17" height="14" stroke="#00a800" stroke-width="1.3"/>
<rect x="751.5" y="821.5" width="17" height="14" stroke="#ffffff" stroke-width="3.4"/><rect x="751.5" y="821.5" width="17" height="14" stroke="#00a800" stroke-width="1.3"/>
<rect x="803.5" y="821.5" width="17" height="14" stroke="#ffffff" stroke-width="3.4"/><rect x="803.5" y="821.5" width="17" height="14" stroke="#00a800" stroke-width="1.3"/>
<rect x="843.5" y="845.2" width="17" height="14" stroke="#ffffff" stroke-width="3.4"/><rect x="843.5" y="845.2" width="17" height="14" stroke="#00a800" stroke-width="1.3"/>
<rect x="791.7" y="870.2" width="17" height="14" stroke="#ffffff" stroke-width="3.4"/><rect x="791.7" y="870.2" width="17" height="14" stroke="#00a800" stroke-width="1.3"/>
<rect x="831.5" y="895.2" width="17" height="14" stroke="#ffffff" stroke-width="3.4"/><rect x="831.5" y="895.2" width="17" height="14" stroke="#00a800" stroke-width="1.3"/>
<rect x="1243.9" y="568.0" width="17" height="14" stroke="#ffffff" stroke-width="3.4"/><rect x="1243.9" y="568.0" width="17" height="14" stroke="#00a800" stroke-width="1.3"/>
<rect x="1279.0" y="581.7" width="17" height="14" stroke="#ffffff" stroke-width="3.4"/><rect x="1279.0" y="581.7" width="17" height="14" stroke="#00a800" stroke-width="1.3"/>
<rect x="1301.1" y="588.5" width="17" height="14" stroke="#ffffff" stroke-width="3.4"/><rect x="1301.1" y="588.5" width="17" height="14" stroke="#00a800" stroke-width="1.3"/>
<rect x="1261.3" y="613.3" width="17" height="14" stroke="#ffffff" stroke-width="3.4"/><rect x="1261.3" y="613.3" width="17" height="14" stroke="#00a800" stroke-width="1.3"/>
<rect x="1301.1" y="642.2" width="17" height="14" stroke="#ffffff" stroke-width="3.4"/><rect x="1301.1" y="642.2" width="17" height="14" stroke="#00a800" stroke-width="1.3"/>
<rect x="1296.7" y="692.2" width="17" height="14" stroke="#ffffff" stroke-width="3.4"/><rect x="1296.7" y="692.2" width="17" height="14" stroke="#00a800" stroke-width="1.3"/>
<rect x="1340.9" y="688.2" width="17" height="14" stroke="#ffffff" stroke-width="3.4"/><rect x="1340.9" y="688.2" width="17" height="14" stroke="#00a800" stroke-width="1.3"/>
<rect x="1313.0" y="735.8" width="17" height="14" stroke="#ffffff" stroke-width="3.4"/><rect x="1313.0" y="735.8" width="17" height="14" stroke="#00a800" stroke-width="1.3"/>
<rect x="1340.9" y="760.2" width="17" height="14" stroke="#ffffff" stroke-width="3.4"/><rect x="1340.9" y="760.2" width="17" height="14" stroke="#00a800" stroke-width="1.3"/>
<rect x="1284.8" y="781.4" width="17" height="14" stroke="#ffffff" stroke-width="3.4"/><rect x="1284.8" y="781.4" width="17" height="14" stroke="#00a800" stroke-width="1.3"/>
<rect x="1256.2" y="826.0" width="17" height="14" stroke="#ffffff" stroke-width="3.4"/><rect x="1256.2" y="826.0" width="17" height="14" stroke="#00a800" stroke-width="1.3"/>
<rect x="1306.9" y="831.1" width="17" height="14" stroke="#ffffff" stroke-width="3.4"/><rect x="1306.9" y="831.1" width="17" height="14" stroke="#00a800" stroke-width="1.3"/>
<rect x="1215.4" y="860.0" width="17" height="14" stroke="#ffffff" stroke-width="3.4"/><rect x="1215.4" y="860.0" width="17" height="14" stroke="#00a800" stroke-width="1.3"/>
<rect x="1273.2" y="870.2" width="17" height="14" stroke="#ffffff" stroke-width="3.4"/><rect x="1273.2" y="870.2" width="17" height="14" stroke="#00a800" stroke-width="1.3"/>
<rect x="1198.3" y="910.0" width="17" height="14" stroke="#ffffff" stroke-width="3.4"/><rect x="1198.3" y="910.0" width="17" height="14" stroke="#00a800" stroke-width="1.3"/>
<rect x="1089.5" y="940.6" width="17" height="14" stroke="#ffffff" stroke-width="3.4"/><rect x="1089.5" y="940.6" width="17" height="14" stroke="#00a800" stroke-width="1.3"/>
<rect x="1155.5" y="939.6" width="17" height="14" stroke="#ffffff" stroke-width="3.4"/><rect x="1155.5" y="939.6" width="17" height="14" stroke="#00a800" stroke-width="1.3"/>
<rect x="1135.1" y="955.2" width="17" height="14" stroke="#ffffff" stroke-width="3.4"/><rect x="1135.1" y="955.2" width="17" height="14" stroke="#00a800" stroke-width="1.3"/>
<rect x="1158.2" y="891.2" width="17" height="14" fill="#a8c870" stroke="#ffffff" stroke-width="3.4"/><rect x="1158.2" y="891.2" width="17" height="14" fill="none" stroke="#f5a020" stroke-width="1.4"/>
</g>
<rect x="1354" y="516" width="29" height="19.5" fill="#6b9e52"/>
<text x="1368.5" y="530" text-anchor="middle" font-family="Liberation Sans" font-weight="bold" font-size="12" fill="#f4f4f4">20x</text>
<rect x="1720" y="1097" width="128" height="5" fill="#a0a0a0"/>
<rect x="1714.5" y="1070.5" width="137" height="27" fill="#fff" stroke="#000" stroke-width="1"/>
<path d="M1719.5,1078 V1074 H1849.5 V1078" stroke="#000" stroke-width="1.8" fill="none"/>
<text x="1782.5" y="1090" text-anchor="middle" font-family="Liberation Sans" font-size="13" fill="#111">5 mm</text>
</g></svg>
<!-- RIGHT PANEL -->
<div class="a" style="left:1876px;top:200px;width:678px;height:2px;background:#dcdcdc"></div>
<div class="a" style="left:2022px;top:208px;width:418px;height:84px;border:2px solid #393939"></div>
<div class="a" style="left:2128px;top:210px;width:102px;height:80px;background:#376f8d"></div>
<div class="a" style="left:2022px;top:335px;width:106px;height:84px;border:2px solid #393939"></div>
<svg style="left:0;top:0" width="2560" height="440"><g fill="#eeeeee" stroke="#161616" stroke-width=".5">
<rect x="2060.9" y="229.0" width="4.4" height="3.4"/>
<rect x="2076.9" y="229.0" width="4.4" height="3.4"/>
<rect x="2069.0" y="238.1" width="4.4" height="3.4"/>
<rect x="2085.0" y="238.1" width="4.4" height="3.4"/>
<rect x="2060.9" y="247.2" width="4.4" height="3.4"/>
<rect x="2076.9" y="247.2" width="4.4" height="3.4"/>
<rect x="2165.0" y="228.0" width="4.4" height="3.4"/>
<rect x="2176.9" y="228.0" width="4.4" height="3.4"/>
<rect x="2188.9" y="228.0" width="4.4" height="3.4"/>
<rect x="2171.0" y="235.0" width="4.4" height="3.4"/>
<rect x="2183.0" y="235.0" width="4.4" height="3.4"/>
<rect x="2165.0" y="241.9" width="4.4" height="3.4"/>
<rect x="2176.9" y="241.9" width="4.4" height="3.4"/>
<rect x="2188.9" y="241.9" width="4.4" height="3.4"/>
<rect x="2171.0" y="248.9" width="4.4" height="3.4"/>
<rect x="2183.0" y="248.9" width="4.4" height="3.4"/>
<rect x="2267.8" y="225.9" width="4.4" height="3.4"/>
<rect x="2277.8" y="225.9" width="4.4" height="3.4"/>
<rect x="2287.8" y="225.9" width="4.4" height="3.4"/>
<rect x="2272.8" y="231.9" width="4.4" height="3.4"/>
<rect x="2282.8" y="231.9" width="4.4" height="3.4"/>
<rect x="2292.8" y="231.9" width="4.4" height="3.4"/>
<rect x="2267.8" y="237.8" width="4.4" height="3.4"/>
<rect x="2277.8" y="237.8" width="4.4" height="3.4"/>
<rect x="2287.8" y="237.8" width="4.4" height="3.4"/>
<rect x="2272.8" y="243.8" width="4.4" height="3.4"/>
<rect x="2282.8" y="243.8" width="4.4" height="3.4"/>
<rect x="2292.8" y="243.8" width="4.4" height="3.4"/>
<rect x="2267.8" y="249.9" width="4.4" height="3.4"/>
<rect x="2277.8" y="249.9" width="4.4" height="3.4"/>
<rect x="2287.8" y="249.9" width="4.4" height="3.4"/>
<rect x="2370.9" y="224.9" width="4.1" height="3.3"/>
<rect x="2378.9" y="224.9" width="4.1" height="3.3"/>
<rect x="2386.9" y="224.9" width="4.1" height="3.3"/>
<rect x="2394.9" y="224.9" width="4.1" height="3.3"/>
<rect x="2374.9" y="228.9" width="4.1" height="3.3"/>
<rect x="2382.9" y="228.9" width="4.1" height="3.3"/>
<rect x="2390.9" y="228.9" width="4.1" height="3.3"/>
<rect x="2398.9" y="228.9" width="4.1" height="3.3"/>
<rect x="2370.9" y="232.9" width="4.1" height="3.3"/>
<rect x="2378.9" y="232.9" width="4.1" height="3.3"/>
<rect x="2386.9" y="232.9" width="4.1" height="3.3"/>
<rect x="2394.9" y="232.9" width="4.1" height="3.3"/>
<rect x="2374.9" y="236.9" width="4.1" height="3.3"/>
<rect x="2382.9" y="236.9" width="4.1" height="3.3"/>
<rect x="2390.9" y="236.9" width="4.1" height="3.3"/>
<rect x="2398.9" y="236.9" width="4.1" height="3.3"/>
<rect x="2370.9" y="240.9" width="4.1" height="3.3"/>
<rect x="2378.9" y="240.9" width="4.1" height="3.3"/>
<rect x="2386.9" y="240.9" width="4.1" height="3.3"/>
<rect x="2394.9" y="240.9" width="4.1" height="3.3"/>
<rect x="2374.9" y="244.9" width="4.1" height="3.3"/>
<rect x="2382.9" y="244.9" width="4.1" height="3.3"/>
<rect x="2390.9" y="244.9" width="4.1" height="3.3"/>
<rect x="2398.9" y="244.9" width="4.1" height="3.3"/>
<rect x="2370.9" y="248.9" width="4.1" height="3.3"/>
<rect x="2378.9" y="248.9" width="4.1" height="3.3"/>
<rect x="2386.9" y="248.9" width="4.1" height="3.3"/>
<rect x="2394.9" y="248.9" width="4.1" height="3.3"/>
<rect x="2374.9" y="252.9" width="4.1" height="3.3"/>
<rect x="2382.9" y="252.9" width="4.1" height="3.3"/>
<rect x="2390.9" y="252.9" width="4.1" height="3.3"/>
<rect x="2398.9" y="252.9" width="4.1" height="3.3"/>
</g>
<g>
 <path d="M2074,361 L2086.5,361 L2087,379.5 L2081,380 Q2078,371 2074,369 Q2068,365 2065,361 Z" fill="#9a9a9a"/>
 <path d="M2059.5,351.5 H2091 V383" stroke="#f2f2f2" stroke-width="2.2" fill="none"/>
 <path d="M2060,352 V383 H2090" stroke="#f2f2f2" stroke-width="2.2" stroke-dasharray="3,2.2" fill="none"/>
 <rect x="2061.5" y="353.5" width="27.5" height="28" stroke="#111" stroke-width="1" fill="none"/>
 <g fill="#f2f2f2">
  <rect x="2063" y="354.9" width="6" height="6"/><rect x="2072" y="354.9" width="6" height="6"/><rect x="2080.9" y="354.9" width="6" height="6"/>
  <rect x="2072" y="364" width="6" height="6"/><rect x="2080.9" y="364" width="6" height="6"/><rect x="2080.9" y="373" width="6" height="6"/>
 </g>
 <g fill="#111"><rect x="2065.2" y="357.1" width="1.6" height="1.6"/><rect x="2074.2" y="357.1" width="1.6" height="1.6"/><rect x="2083.1" y="357.1" width="1.6" height="1.6"/></g>
 <g fill="#888"><rect x="2074.2" y="366.2" width="1.6" height="1.6"/><rect x="2083.1" y="366.2" width="1.6" height="1.6"/><rect x="2083.1" y="375.2" width="1.6" height="1.6"/></g>
</g>
</svg>
<!-- BOTTOM BAR -->
<div class="a" style="left:490px;top:1385px;width:48px;height:49px;border:1.3px solid #c8c8c8;border-radius:5px;background:#1e1e1e;overflow:hidden">
 <div class="a" style="left:1px;top:19px;width:45px;height:28px;background:#008000;border-radius:5px 5px 4px 4px"></div>
</div>
<svg style="left:0;top:0" width="2560" height="1440">
 <path d="M555,1398.5 H569 L573,1404 V1427 L568,1432 H556 L551,1427 V1404 Z" stroke="#f0f0f0" stroke-width="2.2" fill="#252525"/>
 <rect x="551" y="1407" width="22" height="7.3" fill="#e6e6e6"/>
 <path d="M551,1424.5 H573" stroke="#f0f0f0" stroke-width="2"/>
 <circle cx="586.2" cy="1397" r="11.7" fill="#1fa83e"/>
 <path d="M579.5,1397.5 L584.5,1404.5 L592.5,1391.5" stroke="#eeeeee" stroke-width="2.6" fill="none" stroke-linejoin="miter"/>
</svg>
<div class="a" style="left:1487px;top:1385px;width:183px;height:49px;background:#323436;border:2px solid #2c2d2f"></div>
<div class="a" style="left:1682px;top:1385px;width:182px;height:49px;background:#50555a;border:2px solid #2f3235"></div>
<div class="a" style="left:1876px;top:1385px;width:333px;height:49px;background:#50555a;border:2px solid #2f3235"></div>
<div class="a" style="left:2221px;top:1385px;width:333px;height:49px;background:#50555a;border:2px solid #2f3235"></div>
<svg style="left:0;top:0" width="2560" height="1440">
 <path d="M1509,1398.5 L1524,1414 H1494 Z" stroke="#5e6062" stroke-width="1.8" fill="none"/>
 <path d="M1700,1404 H1731 L1715.5,1420 Z" stroke="#f0f0f0" stroke-width="2.2" fill="none"/>
 <path d="M2001,1394.5 L2017,1409 L2001,1424 Z" stroke="#f0f0f0" stroke-width="2" fill="none"/>
 <!-- priority scan icon -->
 <g>
  <path d="M2347,1400.5 L2359.5,1403 L2340,1425 L2327,1421.5 Z" fill="#cfcfcf" stroke="#e8e8e8" stroke-width="1"/>
  <ellipse cx="2350" cy="1406" rx="2.8" ry="2" fill="#b8b8b8"/><ellipse cx="2345" cy="1411" rx="2.8" ry="2" fill="#b8b8b8"/>
  <path d="M2338,1414.5 L2337,1419" stroke="#111" stroke-width="1.3"/><circle cx="2336.6" cy="1420.8" r=".8" fill="#111"/>
  <path d="M2327.5,1398 Q2333,1392 2340,1396.5" stroke="#eeeeee" stroke-width="1.8" fill="none"/>
  <path d="M2342.5,1399.5 L2337,1398.5 L2341,1394 Z" fill="#eeeeee"/>
 </g>
</svg>

<!-- TEXTS -->
<div class="t" style="top:16.18px;font-size:43px;left:65.44px;transform:scaleX(0.9066)">OLYMPUS VS200 ASW</div>
<div class="t" style="top:15.09px;font-size:19px;left:1597.33px;transform:scaleX(0.8824)">Batch Scan</div>
<div class="t" style="top:44.70px;font-size:14.5px;left:1588.46px;transform:scaleX(0.9388)">Edit Focus Map</div>
<div class="t c" style="top:47.30px;font-size:14.5px;left:1737.89px;transform:scaleX(0.9253)">Scan Project</div>
<div class="t c" style="top:47.30px;font-size:14.5px;left:1888.08px;transform:scaleX(0.9616)">Overview</div>
<div class="t c" style="top:47.30px;font-size:14.5px;left:2039.76px;transform:scaleX(0.9633)">Detail</div>
<div class="t c" style="top:47.30px;font-size:14.5px;left:2178.16px;transform:scaleX(0.9326)">Finish</div>
<div class="t c" style="top:130.70px;font-size:14.5px;left:7.01px;transform:scaleX(0.9006)">Exchange Trays</div>
<div class="t c" style="top:130.70px;font-size:14.5px;left:159.14px;transform:scaleX(0.8681)">Trays</div>
<div class="t c" style="top:130.70px;font-size:14.5px;left:258.03px;transform:scaleX(0.9380)">Gallery</div>
<div class="t c" style="top:130.70px;font-size:14.5px;left:364.84px;transform:scaleX(0.9706)">Image</div>
<div class="t c" style="top:130.70px;font-size:14.5px;left:451.91px;transform:scaleX(0.9177)">Scan Areas</div>
<div class="t c" style="top:130.70px;font-size:14.5px;left:557.13px;transform:scaleX(0.9352)">Focus Map</div>
<div class="t c" style="top:130.70px;font-size:14.5px;left:1542.77px;transform:scaleX(1.0030)">Zoom Out</div>
<div class="t c" style="top:130.70px;font-size:14.5px;left:1666.41px;transform:scaleX(0.9899)">Zoom In</div>
<div class="t c" style="top:130.70px;font-size:14.5px;left:1775.54px;transform:scaleX(0.9891)">Auto Zoom</div>
<div class="t c" style="top:130.70px;font-size:14.5px;left:1891.12px;transform:scaleX(0.9249)">Recalculate</div>
<div class="t c" style="top:130.70px;font-size:14.5px;left:2026.04px;transform:scaleX(0.9568)">Delete</div>
<div class="t c" style="top:130.70px;font-size:14.5px;left:2115.52px;transform:scaleX(0.9069)">Reset Changes</div>
<div class="t" style="top:177.51px;font-size:15.7px;left:1875.87px;transform:scaleX(1.0024)">Focus positions</div>
<div class="t" style="top:216.70px;font-size:14.5px;left:1875.95px;transform:scaleX(0.9567)">Focus position density:</div>
<div class="t c" style="top:261.10px;font-size:14.5px;left:2062.30px;transform:scaleX(0.9352)">Low</div>
<div class="t c" style="top:261.10px;font-size:14.5px;left:2156.33px;transform:scaleX(0.9720)">Normal</div>
<div class="t c" style="top:261.10px;font-size:14.5px;left:2268.79px;transform:scaleX(1.0011)">High</div>
<div class="t c" style="top:261.10px;font-size:14.5px;left:2353.95px;transform:scaleX(0.9453)">Extra High</div>
<div class="t" style="top:306.70px;font-size:14.5px;left:2022.64px;transform:scaleX(0.9578)">&#x27;Extra high&#x27; is not available for 60x and 100x. &#x27;High&#x27; will be used instead.</div>
<div class="t" style="top:343.70px;font-size:14.5px;left:1875.83px;transform:scaleX(0.9782)">Non-sample regions</div>
<div class="t" style="top:362.70px;font-size:14.5px;left:1875.84px;transform:scaleX(0.9672)">during detail scan:</div>
<div class="t c" style="top:388.20px;font-size:14.5px;left:2025.72px;transform:scaleX(0.9337)">Include in Scan</div>
<div class="t" style="top:1402.75px;font-size:14.2px;left:496.42px;transform:scaleX(1.0129)">60 ml</div>
<div class="t" style="top:1388.20px;font-size:14.5px;left:627.96px;transform:scaleX(0.9268)">Selected: Tray 21 / Slide 2</div>
<div class="t" style="top:1388.20px;font-size:14.5px;left:822.47px;transform:scaleX(0.9117)">Scan project: H_E</div>
<div class="t" style="top:1417.50px;font-size:14.5px;left:627.94px;transform:scaleX(0.9670)">Number of included slides: 2</div>
<div class="t" style="top:1402.70px;font-size:14.5px;color:#6a6a6a;left:1531.06px;transform:scaleX(0.9252)">Select Previous Slide</div>
<div class="t" style="top:1402.70px;font-size:14.5px;left:1736.96px;transform:scaleX(0.9381)">Select Next Slide</div>
<div class="t" style="top:1402.70px;font-size:14.5px;left:2027.47px;transform:scaleX(0.9122)">Start Scan</div>
<div class="t" style="top:1402.70px;font-size:14.5px;left:2364.75px;transform:scaleX(0.9415)">Priority Scan</div>
</body></html>
